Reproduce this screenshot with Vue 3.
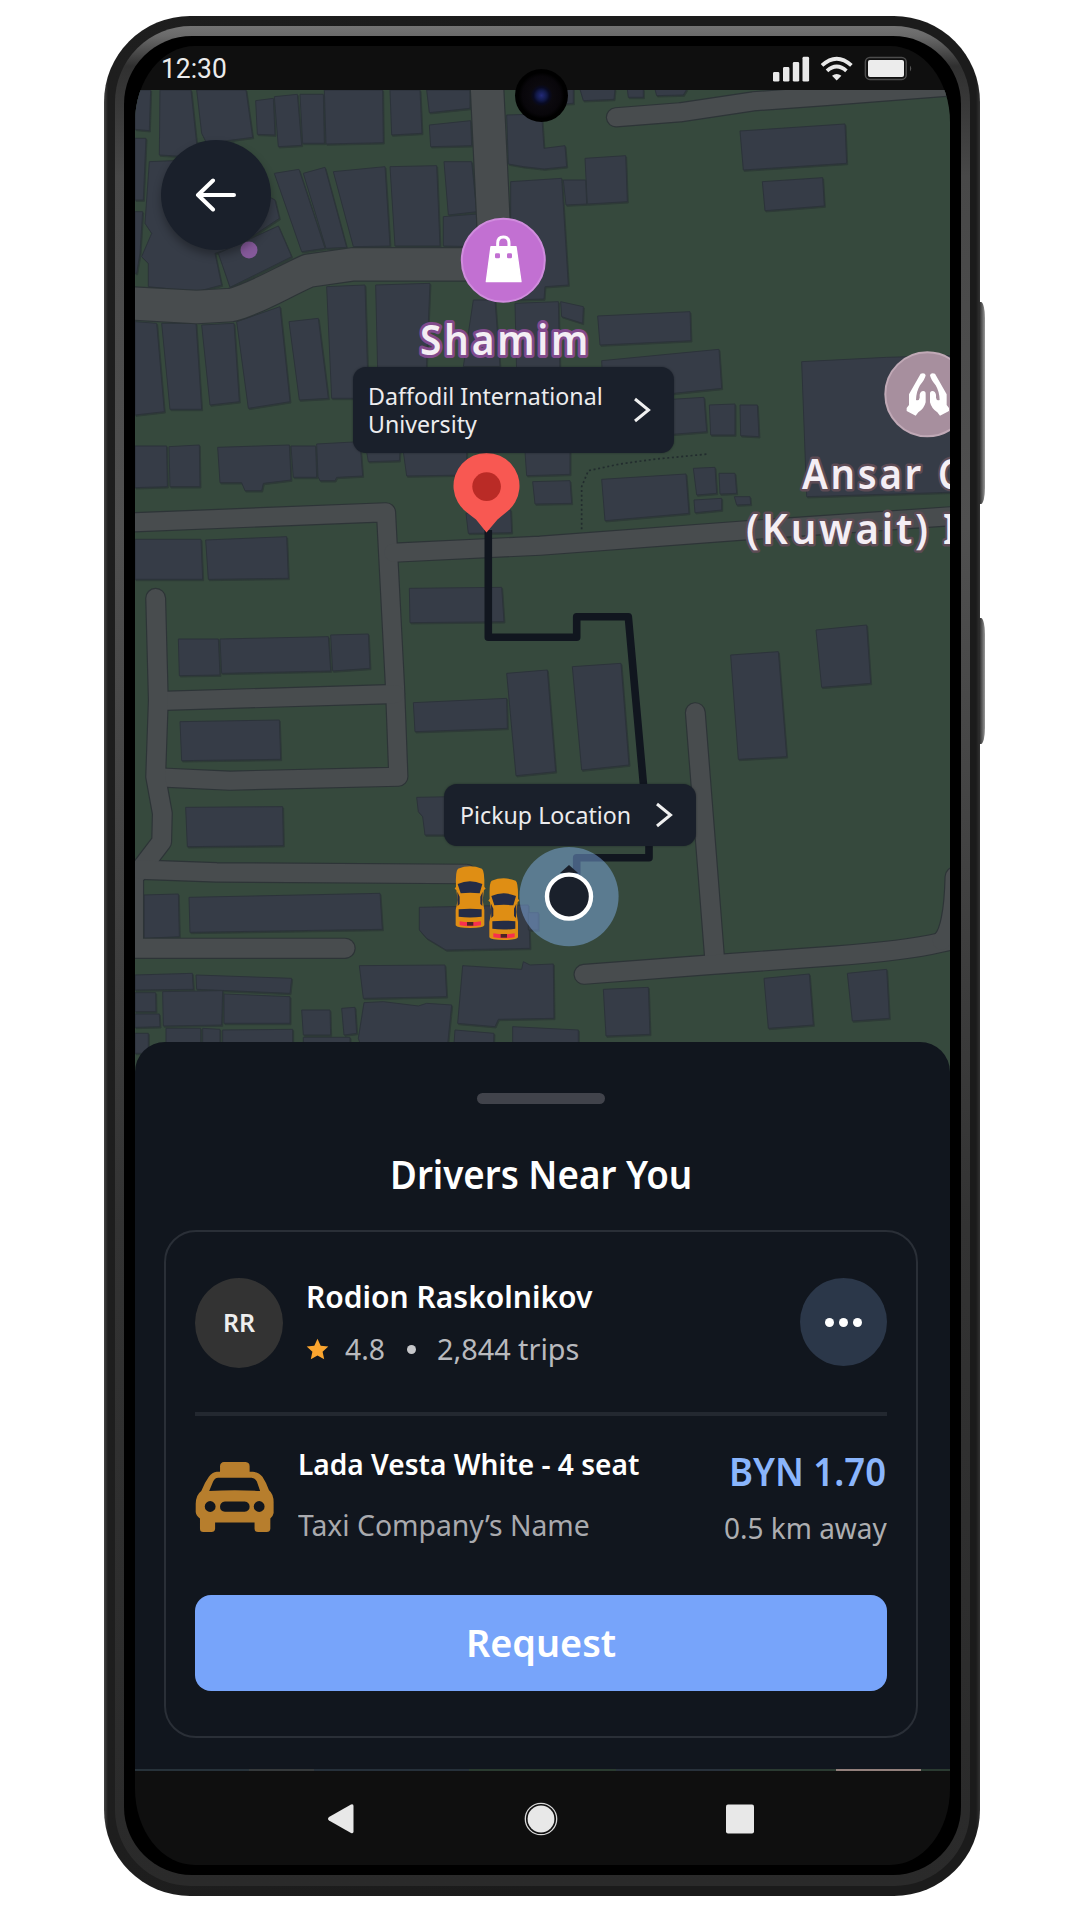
<script setup>
const tiles = {
  a: [90, 0],
  b: [540, 0],
  c: [90, 340],
  d: [540, 340],
  e: [90, 700],
  f: [540, 700],
}
const place = (t) => `translate(${tiles[t][0]} ${tiles[t][1]}) scale(0.33333)`

// Building footprints, grouped by map tile (three units per pixel)
const buildings = {
  a: [
    '135,270 182,270 178,392 135,388',
    '210,270 303,270 322,450 290,470 208,465',
    '320,270 468,270 488,412 350,430 335,400',
    '497,302 550,295 555,405 502,403',
    '553,290 622,283 635,436 565,440',
    '630,283 700,283 703,430 638,430',
    '703,270 878,270 880,428 708,432',
    '900,270 990,270 996,400 905,405',
    '1010,270 1140,270 1140,325 1018,338',
    '1018,375 1142,362 1145,437 1022,440',
    '1250,345 1355,342 1362,445 1425,437 1430,500 1362,507 1300,500 1255,492',
    '1150,900 1215,900 1230,1100 1120,1100',
    '1262,545 1415,535 1435,855 1365,860 1362,897 1262,900',
    '135,415 168,415 160,600 135,600',
    '135,635 158,635 150,760 140,820 135,820',
    '178,485 300,480 480,560 555,600 568,655 440,740 375,760 395,855 320,875 175,860 175,790 155,770 185,700 165,670',
    '385,760 565,678 605,770 420,862',
    '553,520 627,508 705,745 635,755',
    '640,520 705,502 770,742 708,745',
    '730,515 885,500 900,738 790,740',
    '900,500 1040,497 1050,738 915,738',
    '1062,485 1145,485 1160,635 1075,645',
    '1060,650 1165,642 1165,740 1060,738',
    '135,965 200,970 223,1235 135,1245',
    '215,970 318,970 335,1228 240,1228',
    '335,975 432,970 448,1205 360,1215',
    '440,965 570,920 600,1205 475,1225',
    '597,965 685,955 715,1195 628,1200',
    '710,860 825,855 835,1195 725,1195',
    '857,855 1020,850 1005,1200 865,1200',
    '1275,910 1405,905 1410,1120 1280,1120',
    '1412,905 1480,920 1478,970 1415,950',
  ],
  b: [
    '173,948 450,935 453,1022 180,1035',
    '185,1082 537,1048 545,1165 400,1180 190,1180',
    '135,475 257,467 262,605 142,612',
    '70,540 137,540 140,612 78,615',
    '600,393 915,372 920,490 610,510',
    '667,545 848,533 853,618 675,632',
    '60,265 100,265 100,310 60,312',
    '120,268 225,268 222,298 130,302',
    '262,268 310,268 310,292 265,292',
    '345,268 440,268 430,285 350,287',
  ],
  c: [
    '135,318 230,318 232,440 135,443',
    '237,320 328,315 330,440 240,440',
    '383,322 598,315 603,420 520,430 515,452 465,452 455,428 390,428',
    '603,318 677,318 680,412 610,412',
    '680,312 810,305 818,408 740,412 735,422 690,422 684,410',
    '830,335 930,335 928,362 835,365',
    '940,335 1130,335 1130,405 950,408',
    '1305,335 1440,335 1440,403 1310,407',
    '1328,425 1440,422 1445,490 1335,492',
    '1128,520 1262,510 1265,578 1135,580',
    '135,598 333,598 338,718 135,718',
    '347,600 590,590 595,715 355,718',
    '958,745 1235,742 1242,845 960,848',
    '265,897 385,897 390,1005 268,1007',
    '390,897 715,890 722,993 395,1000',
    '722,885 835,882 840,985 728,993',
    '1250,1000 1372,990 1397,1295 1278,1307',
  ],
  d: [
    '785,65 1040,52 1300,45 1300,455 1190,458 800,470',
    '395,178 492,172 500,275 395,283',
    '508,195 585,192 585,285 512,285',
    '600,195 652,195 657,290 602,287',
    '185,418 438,402 447,520 195,542',
    '460,385 525,382 530,460 470,465',
    '537,400 585,400 590,460 540,462',
    '462,480 545,475 545,510 465,518',
    '583,470 630,470 632,493 590,495',
    '828,870 980,855 992,1030 845,1042',
    '572,945 715,935 740,1250 595,1258',
    '97,980 243,970 267,1275 125,1290',
  ],
  e: [
    '970,8 1250,-5 1252,85 975,95',
    '270,65 568,60 572,178 275,182',
    '287,322 578,320 580,437 292,440',
    '980,292 1090,290 1090,405 1005,405 998,350 985,335',
    '162,585 265,582 268,710 162,715',
    '297,592 870,580 877,688 300,697',
    '988,622 1315,615 1320,745 1068,750 1010,715 988,690',
    '1315,638 1345,638 1345,690 1315,690',
    '808,797 1065,795 1070,890 820,895',
    '1118,797 1295,808 1300,785 1320,795 1390,792 1392,955 1225,958 1215,980 1103,970',
    '135,825 307,820 310,868 135,870',
    '318,825 605,835 600,880 320,868',
    '135,878 197,878 198,935 135,935',
    '218,875 398,872 395,975 220,978',
    '402,882 600,890 600,970 402,970',
    '135,942 208,942 210,980 135,982',
    '135,1000 175,1000 175,1060 135,1060',
    '228,985 332,985 332,1060 228,1060',
    '338,985 390,988 390,1060 338,1060',
    '398,990 608,988 608,1060 398,1060',
    '635,930 720,930 722,1005 640,1005',
    '755,925 795,922 800,1000 762,1005',
    '640,1012 780,1012 780,1060 640,1060',
    '822,908 880,905 985,918 1010,910 1085,915 1070,1060 820,1060 805,1015',
    '1095,990 1212,1000 1210,1060 1090,1060',
    '1268,980 1465,990 1465,1060 1268,1060',
  ],
  f: [
    '190,868 325,862 330,1003 198,1008',
    '672,835 808,822 820,975 685,985',
    '922,820 1040,808 1048,955 937,963',
  ],
}

const roads = [
  { t: 'a', w: 97, d: 'M1190 240 L1212 700' },
  { t: 'a', w: 97, d: 'M100 909 L320 921 L425 915 C500 895 570 850 655 812 L790 793 H1230' },
  { t: 'b', w: 54, d: 'M228 352 L420 337 L640 304 L860 288 L1250 258' },
  { t: 'c', w: 54, d: 'M100 548 L888 517 L915 1040 L925 1310 L420 1322 L200 1312' },
  { t: 'c', w: 54, d: 'M205 1083 L915 1062' },
  { t: 'd', w: 54, d: 'M-440 638 L0 617 L620 571 L1260 527' },
  { t: 'e', w: 56, d: 'M197 -305 L205 0 L197 230 L217 340 L215 425 L150 510 L100 560' },
  { t: 'e', w: 52, d: 'M133 530 V745' },
  { t: 'e', w: 57, d: 'M90 745 H765' },
  { t: 'e', w: 55, d: 'M150 509 L380 517 L1130 522' },
  { t: 'f', w: 56, d: 'M466 38 L525 790' },
  { t: 'f', w: 56, d: 'M132 823 L500 795 L880 768 Q1100 752 1200 728 L1270 712' },
  { t: 'f', w: 54, d: 'M1205 722 Q1240 690 1244 530' },
]

// Scales a text run horizontally to the requested width
const vFit = {
  mounted(el, { value }) {
    const w = el.offsetWidth
    el.style.transform = `scaleX(${value / w})`
    el.style.marginRight = `${value - w}px`
  },
}
</script>

<template>
  <main class="page">
    <div class="phone">
      <i class="key key-volume"></i>
      <i class="key key-power"></i>
      <div class="rim">
        <div class="bezel">
          <div class="screen">
            <header class="status">
              <span v-fit="66" class="clock fit">12:30</span>
              <svg class="status-icons" width="142" height="26" viewBox="0 0 142 26">
                <g fill="#e9e9e9">
                  <rect x="1" y="16" width="6.4" height="9.6" rx="1.4" />
                  <rect x="11" y="11" width="6.4" height="14.6" rx="1.4" />
                  <rect x="20.8" y="6" width="6.4" height="19.6" rx="1.4" />
                  <rect x="30.5" y="0.8" width="6.6" height="24.8" rx="1.4" />
                  <path d="M64.7 24.6 L60 19.8 Q64.7 16 69.4 19.8 Z" />
                </g>
                <g fill="none" stroke="#e9e9e9" stroke-width="3.8">
                  <path d="M50 9.4 Q64.7 -4 79.4 9.4" />
                  <path d="M55 14.8 Q64.7 6.2 74.4 14.8" />
                </g>
                <rect x="93.4" y="1.4" width="40.8" height="22" rx="4.5" fill="none" stroke="#4c4c4c" stroke-width="1.5" />
                <rect x="96" y="4" width="36" height="17" rx="2" fill="#ececec" />
                <path d="M138 9.5 Q140.500 12.500 138 15.500Z" fill="#555" />
              </svg>
            </header>

            <section class="stage">
              <svg class="map" width="815" height="990" viewBox="135 90 815 990">
                <rect x="135" y="90" width="815" height="990" fill="#36493d" />
                <g v-for="(list, t) in buildings" :key="t" :transform="place(t)" class="block">
                  <polygon v-for="p in list" :key="p" :points="p" class="block-shadow" />
                  <polygon v-for="p in list" :key="'s' + p" :points="p" />
                </g>
                <g fill="none" stroke-linecap="round" stroke-linejoin="round">
                  <path v-for="r in roads" :key="'o' + r.d" :d="r.d" :transform="place(r.t)" stroke="#2d3437" :stroke-width="r.w + 7" />
                  <path v-for="r in roads" :key="r.d" :d="r.d" :transform="place(r.t)" stroke="#484c4e" :stroke-width="r.w" />
                </g>
                <path d="M125 568 V440 L145 392 L240 372 L340 358 L505 342" :transform="place('d')" fill="none" stroke="#222c2e" stroke-width="5" stroke-dasharray="6 8" />

                <circle cx="249" cy="250" r="8.5" fill="#85599a" />

                <circle cx="503.3" cy="260.3" r="41.5" fill="#c270d2" stroke="#d08cdd" stroke-width="2" />
                <g :transform="place('a')">
                  <path d="M1203 740 H1278 L1293 845 H1189 Z" fill="#fff" stroke="#fff" stroke-width="4" stroke-linejoin="round" />
                  <path d="M1223 745 V730 Q1223 711 1240 711 Q1257 711 1257 730 V745" fill="none" stroke="#fff" stroke-width="9" />
                  <rect x="1215" y="760" width="15" height="15" rx="4" fill="#c270d2" />
                  <rect x="1251" y="760" width="15" height="15" rx="4" fill="#c270d2" />
                </g>
                <text x="420" y="355" textLength="171" lengthAdjust="spacingAndGlyphs" class="poi poi-shop">Shamim</text>

                <circle cx="927.3" cy="394.3" r="42" fill="#a78f9e" stroke="#c0a9b6" stroke-width="2" />
                <g :transform="place('d')" fill="#fff">
                  <path d="M1142 101 Q1155 97 1157 106 Q1155 118 1140 136 Q1129 154 1128 180 Q1137 184 1139 173 V164 Q1141 154 1150 153 Q1157 153 1157 161 V187 Q1152 207 1135 217 L1127 227 L1100 213 V204 L1107 195 V163 Z" />
                  <path transform="translate(2327 0) scale(-1 1)" d="M1142 101 Q1155 97 1157 106 Q1155 118 1140 136 Q1129 154 1128 180 Q1137 184 1139 173 V164 Q1141 154 1150 153 Q1157 153 1157 161 V187 Q1152 207 1135 217 L1127 227 L1100 213 V204 L1107 195 V163 Z" />
                </g>
                <text x="802" y="489" textLength="122" lengthAdjust="spacingAndGlyphs" class="poi poi-place">Ansar</text>
                <text transform="translate(938 489) scale(.86 1)" class="poi poi-place">C</text>
                <text x="746" y="544" textLength="185" lengthAdjust="spacingAndGlyphs" class="poi poi-place">(Kuwait)</text>
                <text transform="translate(943 544) scale(.86 1)" class="poi poi-place">I</text>

                <path d="M488.3 530 V637.3 H576.7 V616.7 H628.3 L643.5 785 L649 845 V857.7 H576.7 V880" fill="none" stroke="#11161f" stroke-width="7.6" stroke-linejoin="round" />

                <path d="M486.5 532.5 L476 519.5 Q472 516.500 467 512.500 A33 33 0 1 1 506 512.500 Q501 516.500 497.500 519.500 Z" fill="#f85852" />
                <circle cx="486.600" cy="486.600" r="14.300" fill="#ba2b26" />

                <circle cx="569" cy="896.600" r="49.600" fill="rgba(142,190,255,.43)" />
                <path d="M560 873 L569 865 L578 873 Z" fill="#1a202b" />
                <circle cx="569" cy="896.600" r="22" fill="#1a202b" stroke="#fff" stroke-width="4.400" />

                <g v-for="shift in [[0, 0], [101, 36]]" :key="shift[0]" :transform="place('e')">
                  <g :transform="`translate(${shift[0]} ${shift[1]})`">
                    <path d="M1104 506 Q1140 492 1176 506 Q1184 512 1183 560 L1187 566 L1182 570 L1178 600 L1183 630 V676 Q1180 684 1141 684 Q1101 684 1097 676 V630 L1103 600 L1099 570 L1094 566 L1098 560 Q1096 512 1104 506Z" fill="#df8e14" />
                    <path d="M1103 552 Q1140 536 1177 552 L1169 580 Q1140 577 1112 580 Z" fill="#252c45" />
                    <path d="M1102 575 L1109 590 V612 L1103 618Z M1178 575 L1171 590 V612 L1177 618Z" fill="#252c45" />
                    <path d="M1106 628 Q1140 624 1175 628 V650 Q1140 655 1106 650Z" fill="#252c45" />
                    <path d="M1109 664 Q1140 670 1173 664 V676 Q1140 682 1109 676Z" fill="#f8304e" />
                    <rect x="1131" y="666" width="19" height="11" fill="#4c2325" />
                  </g>
                </g>
              </svg>

              <button class="back" aria-label="Back">
                <svg width="42" height="34" viewBox="0 0 42 34" fill="none" stroke="#fff" stroke-width="4" stroke-linecap="round" stroke-linejoin="round">
                  <path d="M39 17 H3 M18 2.500 L3 17 L18 31.500" />
                </svg>
              </button>

              <div class="callout destination">
                <p><span v-fit="235" class="fit">Daffodil International</span><br /><span v-fit="109" class="fit">University</span></p>
                <svg width="18" height="26" viewBox="0 0 18 26" class="chevron"><path d="M2 2 L15.500 13 L2 24" /></svg>
              </div>
              <div class="callout pickup">
                <p><span v-fit="171" class="fit">Pickup Location</span></p>
                <svg width="18" height="26" viewBox="0 0 18 26" class="chevron"><path d="M2 2 L15.500 13 L2 24" /></svg>
              </div>

              <section class="sheet">
                <div class="handle"></div>
                <h1><span v-fit="302" class="fit">Drivers Near You</span></h1>
                <article class="card">
                  <div class="driver">
                    <div class="avatar"><span v-fit="32" class="fit">RR</span></div>
                    <div class="who">
                      <h2><span v-fit="286" class="fit">Rodion Raskolnikov</span></h2>
                      <p class="meta">
                        <svg width="23" height="23" viewBox="0 0 23 23"><path fill="#fba52f" d="M11.500 .8 L14.700 7.800 L22.300 8.600 L16.600 13.700 L18.200 21.300 L11.500 17.400 L4.800 21.300 L6.400 13.700 L.7 8.600 L8.300 7.800Z" /></svg>
                        <span v-fit="40" class="fit score">4.8</span>
                        <i class="dot"></i>
                        <span v-fit="142" class="fit">2,844 trips</span>
                      </p>
                    </div>
                    <button class="more" aria-label="More"><i></i><i></i><i></i></button>
                  </div>
                  <hr />
                  <div class="ride">
                    <svg class="taxi" width="79" height="72" viewBox="316 242 240 219">
                      <path fill="#b77e2d" fill-rule="evenodd" d="M404 245 H470 Q482 246 482 258 V275 H492 Q510 276 521 290 Q533 308 541 331 Q556 343 555 372 V400 Q554 408 545 417 V448 Q544 458 534 458 H508 Q497 458 497 448 V429 H377 V448 Q376 458 366 458 H341 Q331 458 331 448 V417 Q319 408 318 397 V372 Q319 344 335 333 Q345 308 358 290 Q368 277 382 275 H392 V257 Q393 246 404 245Z M386 293 Q376 294 371 304 L359 333 Q437 329 514 333 L504 304 Q499 294 488 293Z M362 364 A16 16 0 1 0 362 397 A16 16 0 1 0 362 364Z M511 364 A16 16 0 1 0 511 397 A16 16 0 1 0 511 364Z M407 365 Q392 367 392 381 Q392 395 407 396 H467 Q482 394 482 381 Q482 367 467 365Z" />
                    </svg>
                    <div class="vehicle">
                      <h3><span v-fit="341" class="fit">Lada Vesta White - 4 seat</span></h3>
                      <p><span v-fit="292" class="fit">Taxi Company’s Name</span></p>
                    </div>
                    <div class="fare">
                      <strong><span v-fit="157" class="fit">BYN 1.70</span></strong>
                      <p><span v-fit="163" class="fit">0.5 km away</span></p>
                    </div>
                  </div>
                  <button class="request"><span v-fit="150" class="fit">Request</span></button>
                </article>
              </section>
              <div class="strip"></div>
            </section>

            <nav class="keys">
              <svg width="815" height="94" viewBox="135 1771 815 94" fill="#e8e8e8">
                <path d="M329 1817 L351 1804.500 Q353.500 1803.500 353.500 1806 V1831.500 Q353.500 1834 351 1833 L329 1820.500 Q327 1818.800 329 1817Z" />
                <circle cx="541" cy="1819" r="13.400" />
                <circle cx="541" cy="1819" r="15.700" fill="none" stroke="#d8d8d8" stroke-width="1.300" />
                <rect x="726" y="1804.500" width="28" height="29" rx="2" />
              </svg>
            </nav>
          </div>
        </div>
      </div>
      <i class="camera"></i>
    </div>
  </main>
</template>

<style>
body {
  background: #fff;
}
</style>

<style scoped>
* {
  box-sizing: border-box;
}
.page {
  width: 1080px;
  height: 1920px;
  padding: 16px 0 0 104px;
  overflow: hidden;
  background: #fff;
  font-family: "Noto Sans", "Open Sans", sans-serif;
  color: #fff;
}
h1, h2, h3, p {
  margin: 0;
}
button {
  border: 0;
  padding: 0;
  font-family: inherit;
  color: inherit;
}
.fit {
  display: inline-block;
  white-space: nowrap;
  transform-origin: left center;
}
.phone {
  position: relative;
  width: 876px;
  height: 1880px;
  padding: 10px 10px 10px 11px;
  border-radius: 86px;
  background: linear-gradient(90deg, #454545 0, #1e1e1e 4px, #1b1b1b 50%, #1b1b1b calc(100% - 4px), #333 100%);
}
.key {
  position: absolute;
  left: 875px;
  width: 6px;
  border-radius: 0 4px 4px 0 / 0 16px 16px 0;
  background: linear-gradient(90deg, #222, #666 60%, #999);
}
.key-volume {
  top: 286px;
  height: 202px;
}
.key-power {
  top: 602px;
  height: 126px;
}
.rim {
  height: 100%;
  padding: 10px 9px 11px 9px;
  border-radius: 76px;
  background: linear-gradient(180deg, #747474 0, #6a6a6a 10px, #303030 40px, #484848 150px, #505050 500px, #333 1200px, #2a2a2a 100%);
}
.bezel {
  height: 100%;
  padding: 10px 11px 10px 11px;
  border-radius: 68px;
  background: #000;
}
.screen {
  display: flex;
  flex-direction: column;
  width: 815px;
  height: 1819px;
  border-radius: 60px / 76px;
  overflow: hidden;
  background: #0f0f0f;
}
.status {
  display: flex;
  justify-content: space-between;
  height: 44px;
  padding: 8px 36px 0 26px;
}
.clock {
  font: 400 28px/30px Roboto, sans-serif;
  color: #ececec;
}
.status-icons {
  margin-top: 2px;
}
.camera {
  position: absolute;
  left: 411px;
  top: 53px;
  width: 53px;
  height: 53px;
  border-radius: 50%;
  background: radial-gradient(circle, #232a78 0, #121a4a 5px, #080a22 8px, #0b090e 11px, #08060a 19px, #000 23px);
}
.stage {
  position: relative;
  height: 1681px;
  padding-top: 952px;
}
.map {
  position: absolute;
  left: 0;
  top: 0;
}
.block {
  fill: #363c47;
  stroke: #2c333a;
  stroke-width: 3;
  stroke-linejoin: round;
}
.block-shadow {
  fill: #2e3b37;
  stroke: #2e3b37;
  transform: translate(3px, 4px);
}
.poi {
  font-family: "Noto Sans", sans-serif;
  font-size: 42px;
  font-weight: 600;
  letter-spacing: 3px;
  fill: #f4eef4;
  paint-order: stroke;
  stroke-linejoin: round;
}
.poi-shop {
  stroke: #814a8c;
  stroke-width: 6px;
}
.poi-place {
  stroke: #5d4b55;
  stroke-width: 5px;
}
.back {
  position: absolute;
  left: 26px;
  top: 50px;
  display: flex;
  align-items: center;
  justify-content: center;
  width: 110px;
  height: 110px;
  border-radius: 50%;
  background: #1a202b;
  box-shadow: 0 5px 8px rgba(0, 0, 0, .3);
}
.callout {
  position: absolute;
  display: flex;
  align-items: center;
  justify-content: space-between;
  border-radius: 13px;
  background: #1a202b;
  box-shadow: 0 0 2px rgba(16, 20, 28, .6);
  font-size: 24px;
  line-height: 28px;
  color: #ececee;
}
.destination {
  left: 218px;
  top: 277px;
  width: 321px;
  height: 86px;
  padding: 0 23px 0 15px;
}
.pickup {
  left: 309px;
  top: 694px;
  width: 252px;
  height: 62px;
  padding: 0 23px 0 16px;
}
.chevron {
  flex: none;
  fill: none;
  stroke: #f0f0f0;
  stroke-width: 3;
}
.sheet {
  position: relative;
  height: 727px;
  border-radius: 30px 30px 0 0;
  padding: 51px 32px 0 29px;
  background: #11161e;
}
.handle {
  width: 128px;
  height: 11px;
  margin: 0 auto;
  border-radius: 6px;
  background: #41434b;
}
h1 {
  height: 50px;
  margin-top: 45px;
  font-size: 40px;
  line-height: 50px;
  font-weight: 600;
  text-align: center;
}
.card {
  height: 508px;
  margin-top: 31px;
  padding: 46px 29px 0;
  border: 2px solid #2a2f37;
  border-radius: 32px;
}
.driver {
  display: flex;
  height: 90px;
}
.avatar {
  display: flex;
  align-items: center;
  justify-content: center;
  width: 88px;
  height: 90px;
  border-radius: 50%;
  background: #333;
  font-size: 25px;
  font-weight: 600;
  line-height: 30px;
  padding-bottom: 2px;
  color: #eee;
}
.who {
  flex: 1;
  margin: -1px 0 0 23px;
}
h2 {
  height: 40px;
  font-size: 30px;
  line-height: 40px;
  font-weight: 600;
}
.meta {
  display: flex;
  align-items: center;
  height: 40px;
  margin-top: 12px;
  font-size: 29px;
  line-height: 40px;
  color: #b9babe;
}
.score {
  margin-left: 16px;
}
.dot {
  width: 9px;
  height: 9px;
  margin: 0 21px 0 22px;
  border-radius: 50%;
  background: #c6c7ca;
}
.more {
  display: flex;
  align-items: center;
  justify-content: center;
  gap: 5px;
  width: 87px;
  height: 88px;
  border-radius: 50%;
  background: #2b3749;
}
.more i {
  width: 9px;
  height: 9px;
  border-radius: 50%;
  background: #fff;
}
hr {
  height: 4px;
  margin: 44px 0 0;
  border: 0;
  background: #232830;
}
.ride {
  display: flex;
  height: 101px;
  margin-top: 28px;
}
.taxi {
  flex: none;
  margin-top: 17px;
}
.vehicle {
  flex: 1;
  margin-left: 24px;
}
h3 {
  height: 40px;
  font-size: 29px;
  line-height: 40px;
  font-weight: 600;
}
.vehicle p {
  margin-top: 21px;
  font-size: 29px;
  line-height: 40px;
  color: #a9aaae;
}
.fare {
  display: flex;
  flex-direction: column;
  align-items: flex-end;
}
.fare strong {
  height: 54px;
  padding-right: 1px;
  font-size: 39px;
  line-height: 54px;
  font-weight: 600;
  color: #8ab5fc;
}
.fare p {
  margin-top: 10px;
  font-size: 29px;
  line-height: 40px;
  color: #adaeb1;
}
.request {
  display: flex;
  align-items: center;
  justify-content: center;
  width: 100%;
  height: 96px;
  margin-top: 50px;
  border-radius: 16px;
  background: #77a4fa;
  font-size: 37px;
  line-height: 50px;
  font-weight: 600;
}
.strip {
  position: relative;
  height: 2px;
  background: linear-gradient(90deg, #27323a 0 14%, #35393b 14% 22%, #26303a 22% 41%, #2a3b30 41% 59%, #28313b 59% 73%, #2a3a31 73% 86%, #93807c 86% 96.500%, #2a3a31 96.500%);
}
.keys {
  height: 94px;
}
.keys svg {
  display: block;
}
</style>
